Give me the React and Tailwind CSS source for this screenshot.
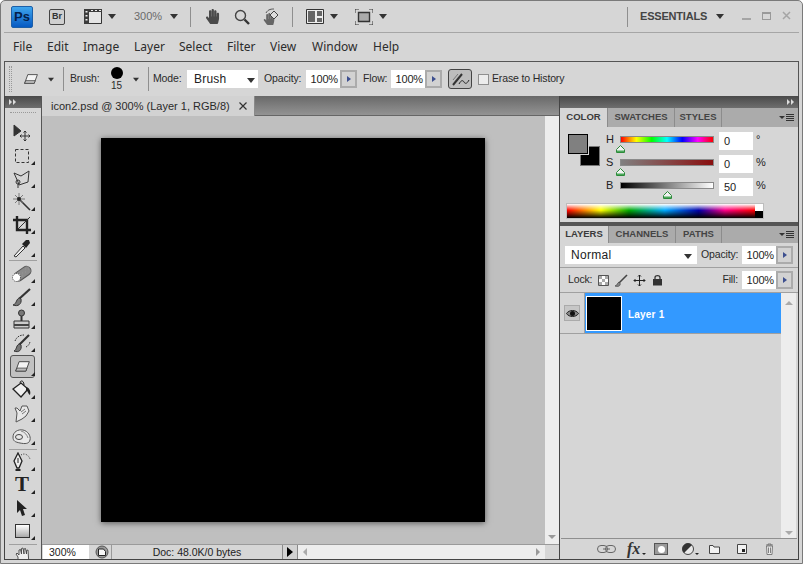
import React from "react";
import { FaHandPaper } from "react-icons/fa";

const Down = ({ className = "" }) => (
  <div className={`w-0 h-0 border-x-[4px] border-x-transparent border-t-[5px] border-t-[#333] ${className}`} />
);

const Sep = ({ className = "" }) => <div className={`w-px bg-[#8f8f8f] ${className}`} />;

const Corner = () => (
  <div className="absolute right-[6px] bottom-[2px] w-0 h-0 border-l-[4px] border-l-transparent border-b-[4px] border-b-[#222]" />
);

const Tool = ({ children, more = true, active = false, className = "" }) => (
  <div className={`relative h-[23px] shrink-0 flex items-center justify-center ${className}`}>
    {active && (
      <div className="absolute left-[5px] top-0 w-[25px] h-[23px] rounded-[3px] border border-[#555] bg-[#c2c2c2]" />
    )}
    <div className="relative flex items-center justify-center -translate-x-[1px]">{children}</div>
    {more && <Corner />}
  </div>
);

const ToolSep = ({ className = "" }) => <div className={`mx-[4px] h-px shrink-0 bg-[#a0a0a0] ${className}`} />;

const Stepper = () => (
  <div className="w-[17px] h-[18px] bg-[#d2d2d2] border-2 border-[#ababab] flex items-center justify-center">
    <div className="w-0 h-0 border-y-[3px] border-y-transparent border-l-[4px] border-l-[#3d4f8f]" />
  </div>
);

const PctInput = ({ value = "100%" }) => (
  <div className="flex items-center">
    <div className="w-[34px] h-[18px] bg-white text-[11px] leading-[18px] text-right pr-[2px] text-[#222]">{value}</div>
    <Stepper />
  </div>
);

const PanelTab = ({ label, width, active }) => (
  <div
    className={`h-full flex items-center justify-center border-r border-[#8c8c8c] font-bold text-[9.5px] ${width} ${
      active ? "bg-[#d6d6d6] text-[#3a3a3a]" : "text-[#444]"
    }`}
  >
    {label}
  </div>
);

const PanelMenu = () => (
  <div className="ml-auto mr-[4px] flex items-center gap-[1px]">
    <div className="w-0 h-0 border-x-[3px] border-x-transparent border-t-[3px] border-t-[#333]" />
    <div className="flex flex-col gap-[1px]">
      <div className="w-[8px] h-px bg-[#333]" />
      <div className="w-[8px] h-px bg-[#333]" />
      <div className="w-[8px] h-px bg-[#333]" />
      <div className="w-[8px] h-px bg-[#333]" />
    </div>
  </div>
);

const Slider = ({ label, track, value, unit, thumb }) => (
  <div className="flex h-[23px] items-start">
    <div className="w-[14px] text-[11px] leading-[14px] text-[#222]">{label}</div>
    <div className="relative w-[94px] h-[7px] mt-[4px] border border-[#8a8a8a]">
      <div className={`w-full h-full ${track}`} />
      <div className={`absolute top-[8px] ${thumb}`}>
        <svg width="9" height="8" viewBox="0 0 9 8">
          <path d="M4.5 .5 8.5 4.5V7.5H.5V4.5Z" fill="#f2f2f2" stroke="#2c8a3a" />
          <path d="M1 5.5H8V7H1Z" fill="#4aa85a" />
        </svg>
      </div>
    </div>
    <div className="ml-[5px] w-[34px] h-[18px] bg-white text-[11px] leading-[18px] pl-[5px] text-[#222]">{value}</div>
    <div className="ml-[3px] text-[11px] leading-[14px] text-[#222]">{unit}</div>
  </div>
);

const Darrows = () => (
  <div className="flex gap-[1px]">
    <div className="w-0 h-0 border-y-[3px] border-y-transparent border-l-[3px] border-l-[#ddd]" />
    <div className="w-0 h-0 border-y-[3px] border-y-transparent border-l-[3px] border-l-[#ddd]" />
  </div>
);

const EraserIcon = ({ size = 20 }) => (
  <svg width={size} height={size * 0.75} viewBox="0 0 20 15">
    <path d="M6 2 18 2 14 13 2 13Z" fill="#f4f4f4" stroke="#333" />
    <path d="M3.5 9.5 15.2 9.5 14 13 2 13Z" fill="#bbb" stroke="#333" strokeWidth=".8" />
  </svg>
);

export default function App() {
  return (
    <div
      className="w-[803px] h-[564px] overflow-hidden bg-[#d6d6d6] flex flex-col rounded-t-[5px] border border-[#7a7a7a] text-[#333]"
      style={{ fontFamily: '"Liberation Sans", Arial, sans-serif' }}
    >
      {/* application bar */}
      <div className="h-[32px] mx-[3px] border-b border-[#a6a6a6] flex items-center shrink-0 relative">
        <div className="ml-[7px] w-[22px] h-[22px] rounded-[2px] border border-[#1c5fa8] bg-[linear-gradient(to_bottom,#3fa6ee,#0659c2)] flex items-center justify-center font-bold text-[13px] text-[#04204a]">
          Ps
        </div>
        <div className="ml-[16px] w-[16px] h-[16px] rounded-[2px] border border-[#444] bg-[#d0d0d0] flex items-center justify-center font-bold text-[9px] text-[#333]">
          Br
        </div>
        <svg className="ml-[19px]" width="18" height="15" viewBox="0 0 18 15">
          <path d="M.5 .5H17.5V14.5H.5Z" fill="#e4e4e4" stroke="#333" />
          <path d="M0 0H5V15H0ZM5 0H18V3H5Z" fill="#3c3c3c" />
          <path d="M1.5 2H3.5V3.5H1.5ZM1.5 6H3.5V7.5H1.5ZM1.5 10H3.5V11.5H1.5ZM7 1H9V2H7ZM11 1H13V2H11ZM15 1H17V2H15Z" fill="#eee" />
        </svg>
        <Down className="ml-[6px]" />
        <div className="ml-[18px] w-[27px] text-[11px] text-[#6a6a6a]">300%</div>
        <Down className="ml-[9px]" />
        <Sep className="ml-[12px] h-[20px]" />
        <FaHandPaper className="ml-[14px] text-[15px] text-[#4a4a4a]" />
        <svg className="ml-[14px]" width="16" height="16" viewBox="0 0 16 16">
          <circle cx="6.5" cy="6.5" r="5" fill="none" stroke="#444" strokeWidth="1.4" />
          <path d="M10.5 10.5 15 15" stroke="#333" strokeWidth="2.4" />
        </svg>
        <div className="relative ml-[13px] w-[16px] h-[17px]">
          <FaHandPaper className="absolute left-0 bottom-0 text-[12px] text-[#666]" />
          <svg className="absolute left-0 top-0" width="16" height="17" viewBox="0 0 16 17">
            <path d="M7 7 11 3 15 7 11 11Z" fill="#ddd" stroke="#444" />
            <path d="M3 5C5 1 9 1 11 1" fill="none" stroke="#555" />
          </svg>
        </div>
        <Sep className="ml-[13px] h-[20px]" />
        <svg className="ml-[13px]" width="18" height="15" viewBox="0 0 18 15">
          <path d="M.5 .5H17.5V14.5H.5Z" fill="#eee" stroke="#333" />
          <path d="M2 2H9V13H2ZM11 2H16V7H11ZM11 9H16V13H11Z" fill="#666" />
        </svg>
        <Down className="ml-[6px]" />
        <svg className="ml-[17px]" width="18" height="16" viewBox="0 0 18 16">
          <path d="M0 4V0H4M14 0H18V4M18 12V16H14M4 16H0V12" fill="none" stroke="#333" />
          <path d="M3.5 3.5H14.5V12.5H3.5Z" fill="#aaa" stroke="#333" strokeWidth="1.4" />
        </svg>
        <Down className="ml-[6px]" />
        <Sep className="ml-[240px] h-[20px]" />
        <div className="ml-[12px] w-[68px] whitespace-nowrap font-bold text-[11px] tracking-[-0.2px] text-[#444]">ESSENTIALS</div>
        <Down className="ml-[8px]" />
        <div className="ml-[18px] w-[9px] h-[2px] bg-[#a5a5a5] mt-[4px]" />
        <div className="ml-[11px] w-[9px] h-[8px] border border-[#999] border-t-2 -mt-[2px]" />
        <svg className="ml-[11px] -mt-[2px]" width="9" height="9" viewBox="0 0 9 9">
          <path d="M1 1 8 8M8 1 1 8" stroke="#a5a5a5" strokeWidth="1.5" />
        </svg>
      </div>

      {/* menu */}
      <div className="h-[28px] shrink-0 flex items-center pl-[12px] text-[12px] text-[#2c2c2c]" style={{ fontFamily: '"Noto Sans", sans-serif' }}>
        <div className="w-[34px]">File</div>
        <div className="w-[36px]">Edit</div>
        <div className="w-[51px]">Image</div>
        <div className="w-[45px]">Layer</div>
        <div className="w-[48px]">Select</div>
        <div className="w-[43px]">Filter</div>
        <div className="w-[42px]">View</div>
        <div className="w-[61px]">Window</div>
        <div>Help</div>
      </div>

      {/* options bar */}
      <div className="h-[35px] mx-[3px] shrink-0 border border-b-0 border-[#555] flex items-center text-[10.5px] tracking-[-0.15px] text-[#2a2a2a] whitespace-nowrap">
        <div className="ml-[4px] w-[3px] h-[26px] border-x border-dotted border-[#999]" />
        <div className="ml-[11px]">
          <EraserIcon size={16} />
        </div>
        <Down className="ml-[8px] scale-75" />
        <Sep className="ml-[8px] h-[24px]" />
        <div className="ml-[6px] w-[29px]">Brush:</div>
        <div className="ml-[11px] w-[13px] flex flex-col items-center -mt-[1px]">
          <div className="w-[12px] h-[12px] rounded-full bg-black" />
          <div className="text-[10px] leading-[11px] mt-[1px]">15</div>
        </div>
        <Down className="ml-[9px] scale-75" />
        <Sep className="ml-[8px] h-[24px]" />
        <div className="ml-[4px] w-[29px]">Mode:</div>
        <div className="ml-[5px] w-[71px] h-[18px] bg-white flex items-center pl-[7px] text-[12px] text-[#222] tracking-[0.2px]">
          Brush
          <Down className="ml-auto mr-[3px] mt-[2px]" />
        </div>
        <div className="ml-[6px] w-[38px]">Opacity:</div>
        <div className="ml-[4px]">
          <PctInput />
        </div>
        <div className="ml-[6px] w-[24px]">Flow:</div>
        <div className="ml-[4px]">
          <PctInput />
        </div>
        <div className="ml-[6px] w-[24px] h-[20px] rounded-[3px] border border-[#444] bg-[#bdbdbd] flex items-center justify-center">
          <svg width="20" height="16" viewBox="0 0 20 16">
            <path d="M3 14 12 3" stroke="#333" strokeWidth="2" />
            <path d="M3 9 8 3" stroke="#777" strokeWidth="1" />
            <path d="M9 13C11 9 13 9 14 11S17 13 19 9" fill="none" stroke="#222" />
          </svg>
        </div>
        <div className="ml-[6px] w-[11px] h-[11px] border border-[#8f8f8f] bg-[#ececec]" />
        <div className="ml-[3px]">Erase to History</div>
      </div>

      {/* workspace */}
      <div className="flex-1 mx-[3px] mb-[3px] border border-[#444] border-t-0 flex min-h-0">
        {/* tools */}
        <div className="w-[37px] shrink-0 border-r border-[#555] flex flex-col overflow-hidden">
          <div className="h-[12px] shrink-0 bg-[linear-gradient(to_bottom,#4a4a4a,#6e6e6e)] flex items-center pl-[4px]">
            <Darrows />
          </div>
          <div className="h-[13px] shrink-0 flex flex-col pt-[4px]">
            <div className="mx-[5px] border-b border-dotted border-[#999]" />
          </div>
          <Tool more={false}>
            <svg width="20" height="20" viewBox="0 0 20 20">
              <path d="M2 2V13L9 8Z" fill="#333" stroke="#333" />
              <path d="M13 8V18M8 13H18M11.5 9.5 13 8 14.5 9.5M11.5 16.5 13 18 14.5 16.5M9.5 11.5 8 13 9.5 14.5M16.5 11.5 18 13 16.5 14.5" fill="none" stroke="#333" />
            </svg>
          </Tool>
          <Tool>
            <svg width="18" height="18" viewBox="0 0 18 18">
              <path d="M2.5 2.5H15.5V15.5H2.5Z" fill="none" stroke="#333" strokeDasharray="3 2" />
            </svg>
          </Tool>
          <Tool>
            <svg width="20" height="20" viewBox="0 0 20 20">
              <path d="M2 4 9 7 17 2 16 13 7 16 6 13Z" fill="none" stroke="#333" />
              <circle cx="6" cy="13" r="2" fill="none" stroke="#333" />
              <path d="M6 15V19" stroke="#333" />
            </svg>
          </Tool>
          <Tool>
            <svg width="20" height="20" viewBox="0 0 20 20">
              <path d="M8 8 18 18" stroke="#333" strokeWidth="1.6" />
              <path d="M7 1V13M1 7H13M3 3 11 11M11 3 3 11" stroke="#666" strokeWidth=".8" />
              <circle cx="7" cy="7" r="2" fill="#222" />
            </svg>
          </Tool>
          <Tool>
            <svg width="20" height="20" viewBox="0 0 20 20">
              <path d="M5 1V15H19M1 5H15V19" fill="none" stroke="#222" strokeWidth="2.4" />
              <path d="M6 14 18 2" stroke="#333" />
            </svg>
          </Tool>
          <Tool>
            <svg width="20" height="20" viewBox="0 0 20 20">
              <path d="M2 18 11 8 13 10 4 19Z" fill="#eee" stroke="#333" />
              <path d="M10 6 14 10 18 5 17 2 14 2Z" fill="#222" />
            </svg>
          </Tool>
          <ToolSep className="my-[1px]" />
          <Tool>
            <svg width="22" height="20" viewBox="0 0 22 20">
              <rect x="2" y="5.500" width="19" height="9" rx="4.500" transform="rotate(-35 11 10)" fill="#8a8a8a" stroke="#555" />
              <circle cx="5.500" cy="13.500" r="4" fill="#fff" stroke="#333" strokeDasharray="1 1" />
              <path d="M11 9h.1M14 8h.1M14 5h.1M17 5h.1M11 12h.1" stroke="#ddd" strokeWidth="1.4" />
            </svg>
          </Tool>
          <Tool>
            <svg width="20" height="20" viewBox="0 0 20 20">
              <path d="M7 12 18 2" stroke="#333" strokeWidth="2.2" />
              <path d="M8 11C4 11 5 17 1 18 6 20 10 17 9 12Z" fill="#777" stroke="#333" />
            </svg>
          </Tool>
          <Tool>
            <svg width="20" height="21" viewBox="0 0 20 21">
              <circle cx="9.5" cy="4" r="3" fill="#777" stroke="#333" />
              <path d="M8.5 7H10.5V12H8.5Z" fill="#333" />
              <path d="M2 12H17V19H2Z" fill="#ccc" stroke="#333" />
              <path d="M2 15H17V17H2Z" fill="#444" />
            </svg>
          </Tool>
          <Tool>
            <svg width="20" height="20" viewBox="0 0 20 20">
              <path d="M7 12 17 2" stroke="#333" strokeWidth="2.2" />
              <path d="M8 11C4 11 5 17 2 18 7 20 10 17 9 12Z" fill="#777" stroke="#333" />
              <path d="M3 8C5 3 9 2 12 2M14 14C16 13 18 11 18 8" fill="none" stroke="#333" strokeDasharray="1.5 1" />
            </svg>
          </Tool>
          <Tool active className="mt-[1px]">
            <EraserIcon size={17} />
          </Tool>
          <Tool>
            <svg width="20" height="20" viewBox="0 0 20 20">
              <path d="M1 9 9 3 16 9 9 17Z" fill="#f0f0f0" stroke="#222" strokeWidth="1.3" />
              <path d="M8 3C8 0 12 0 12 5" fill="none" stroke="#222" />
              <path d="M14 7C18 8 19 12 18 15 16 14 16 11 14 10Z" fill="#222" />
            </svg>
          </Tool>
          <Tool>
            <svg width="18" height="20" viewBox="0 0 18 20">
              <path d="M3 19 4 10 2 5 4 5 7 8 9 3 14 3 16 8 13 13 9 16Z" fill="#e8e8e8" stroke="#555" />
              <path d="M8 9 12 6M9 11 13 8" stroke="#777" />
            </svg>
          </Tool>
          <Tool>
            <svg width="20" height="18" viewBox="0 0 20 18">
              <path d="M1 10C1 5 6 2 11 3S19 9 18 13 13 17 8 16 1 14 1 10Z" fill="#e8e8e8" stroke="#555" />
              <ellipse cx="7" cy="10" rx="3.500" ry="2.500" fill="none" stroke="#444" />
              <path d="M9 4C13 5 15 8 16 11" fill="none" stroke="#888" />
            </svg>
          </Tool>
          <ToolSep className="mt-[2px]" />
          <Tool>
            <svg width="20" height="20" viewBox="0 0 20 20">
              <path d="M6 1 10 9 7 16H5L2 9Z" fill="#eee" stroke="#222" strokeWidth="1.3" />
              <path d="M6 6V11" stroke="#222" />
              <path d="M3.500 17H8.500V19H3.500Z" fill="#222" />
              <path d="M9 3C12 1 16 2 18 7" fill="none" stroke="#333" strokeDasharray="1 1.500" />
            </svg>
          </Tool>
          <Tool>
            <div className="text-[21px] leading-[21px] font-bold text-[#222]" style={{ fontFamily: '"Liberation Serif", serif' }}>
              T
            </div>
          </Tool>
          <Tool>
            <svg width="12" height="18" viewBox="0 0 12 18">
              <path d="M1 1V14L4 11 6 17 9 16 7 10H11Z" fill="#222" />
            </svg>
          </Tool>
          <Tool>
            <div className="w-[15px] h-[14px] border border-[#333] bg-[linear-gradient(to_bottom,#fff,#aaa)]" />
          </Tool>
          <ToolSep className="mt-[2px] mb-[2px]" />
          <div className="flex justify-center pl-[1px] shrink-0">
            <svg width="18" height="18" viewBox="0 0 18 18">
              <path d="M3 18V10L1 7 2 6 4 8V3L5.500 2.500 6.500 7V1.500L8 1 9 7V2L10.500 1.500 11.500 7V3.500L13 3 14 18Z" fill="#eee" stroke="#444" strokeWidth=".9" />
            </svg>
          </div>
        </div>

        {/* document */}
        <div className="w-[517px] shrink-0 flex flex-col">
          <div className="h-[20px] shrink-0 bg-[linear-gradient(to_bottom,#696969,#939393)] flex border-b border-[#666]">
            <div className="w-[213px] h-[20px] bg-[#d2d2d2] flex items-center pl-[9px] text-[11px] text-[#2a2a2a] border-r border-[#8a8a8a] whitespace-nowrap">
              icon2.psd @ 300% (Layer 1, RGB/8)
              <svg className="ml-[9px]" width="8" height="8" viewBox="0 0 8 8">
                <path d="M.5 .5 7.500 7.500M7.500 .5 .5 7.500" stroke="#333" strokeWidth="1.200" />
              </svg>
            </div>
          </div>
          <div className="h-[428px] shrink-0 flex">
            <div className="w-[503px] pr-[1px] bg-[#bfbfbf] flex items-center justify-center">
              <div className="w-[384px] h-[384px] bg-black shadow-[0_1px_6px_rgba(0,0,0,0.55)]" />
            </div>
            <div className="w-[14px] bg-[#ededed] flex flex-col items-center justify-end pb-[5px]">
              <div className="w-0 h-0 border-x-[4px] border-x-transparent border-t-[4px] border-t-[#999]" />
            </div>
          </div>
          <div className="flex-1 flex border-t border-[#9a9a9a] text-[10.5px] leading-[14px] text-[#222]">
            <div className="w-[46px] ml-px bg-white pl-[6px]">300%</div>
            <div className="w-[23px] flex items-center justify-end pr-[2px] border-r border-[#9a9a9a]">
              <svg width="14" height="14" viewBox="0 0 14 14">
                <circle cx="7" cy="7" r="6" fill="#999" stroke="#555" />
                <path d="M3.500 4H8.500L10.500 6.500V10.500H3.500Z" fill="#f6f6f6" stroke="#222" />
              </svg>
            </div>
            <div className="w-[170px] text-center">Doc: 48.0K/0 bytes</div>
            <div className="w-[16px] bg-[#d2d2d2] border-l border-r border-[#8a8a8a] flex items-center justify-center">
              <div className="w-0 h-0 border-y-[5px] border-y-transparent border-l-[6px] border-l-black" />
            </div>
            <div className="w-[247px] bg-[#ededed] flex items-center pl-[5px]">
              <div className="w-0 h-0 border-y-[4px] border-y-transparent border-r-[4px] border-r-[#aaa]" />
              <div className="ml-auto mr-[5px] w-0 h-0 border-y-[4px] border-y-transparent border-l-[4px] border-l-[#999]" />
            </div>
          </div>
        </div>

        {/* panels */}
        <div className="flex-1 border-l border-[#444] flex flex-col min-w-0">
          <div className="h-[12px] shrink-0 bg-[linear-gradient(to_bottom,#4a4a4a,#6e6e6e)] flex items-center justify-end pr-[4px]">
            <Darrows />
          </div>

          <div className="h-[19px] shrink-0 bg-[#ababab] flex">
            <PanelTab label="COLOR" width="w-[48px]" active />
            <PanelTab label="SWATCHES" width="w-[67px]" />
            <PanelTab label="STYLES" width="w-[47px]" />
            <PanelMenu />
          </div>
          <div className="h-[95px] shrink-0 flex flex-col pl-[6px] pt-[5px]">
            <div className="flex">
              <div className="relative w-[46px] h-[38px] shrink-0">
                <div className="absolute left-[14px] top-[14px] w-[20px] h-[20px] bg-black border border-[#777] outline outline-1 outline-[#d6d6d6]" />
                <div className="absolute left-[2px] top-[2px] w-[20px] h-[20px] bg-[#808080] border border-black outline outline-1 outline-[#d6d6d6]" />
              </div>
              <div className="flex flex-col ml-[-6px]">
                <Slider
                  label="H"
                  value="0"
                  unit="°"
                  thumb="-left-[5px]"
                  track="bg-[linear-gradient(to_right,#f00,#ff0,#0f0,#0ff,#00f,#f0f,#f00)]"
                />
                <Slider label="S" value="0" unit="%" thumb="-left-[5px]" track="bg-[linear-gradient(to_right,#808080,#8a0f0f)]" />
                <Slider label="B" value="50" unit="%" thumb="left-[42px]" track="bg-[linear-gradient(to_right,#000,#fff)]" />
              </div>
            </div>
            <div className="mt-[2px] w-[198px] h-[16px] border border-[#bdbdbd] flex">
              <div className="flex-1 bg-[linear-gradient(to_bottom,#fff,transparent_45%,#000),linear-gradient(to_right,#f00,#ff0_18%,#0a0_33%,#0af_52%,#00a_70%,#f08_84%,#f00)]" />
              <div className="w-[8px] flex flex-col">
                <div className="flex-1 bg-white" />
                <div className="flex-1 bg-black" />
              </div>
            </div>
          </div>

          <div className="h-[4px] shrink-0 bg-[#555]" />

          <div className="h-[17px] shrink-0 bg-[#ababab] flex">
            <PanelTab label="LAYERS" width="w-[49px]" active />
            <PanelTab label="CHANNELS" width="w-[67px]" />
            <PanelTab label="PATHS" width="w-[46px]" />
            <PanelMenu />
          </div>
          <div className="h-[25px] shrink-0 border-b border-[#a0a0a0] flex items-center pl-[5px] text-[10.5px] tracking-[-0.15px] text-[#2a2a2a] whitespace-nowrap">
            <div className="w-[132px] h-[18px] bg-white flex items-center pl-[6px] text-[12px] tracking-[0.3px] text-[#222]">
              Normal
              <Down className="ml-auto mr-[5px] mt-[2px]" />
            </div>
            <div className="ml-[4px] w-[38px]">Opacity:</div>
            <div className="ml-[3px]">
              <PctInput />
            </div>
          </div>
          <div className="h-[25px] shrink-0 border-b border-[#a0a0a0] flex items-center pl-[8px] text-[10.5px] tracking-[-0.15px] text-[#2a2a2a]">
            <div className="w-[25px]">Lock:</div>
            <svg className="ml-[5px]" width="11" height="11" viewBox="0 0 11 11">
              <path d="M.5 .5H10.500V10.500H.5Z" fill="#fff" stroke="#555" />
              <path d="M1 1H4V4H1ZM7 1H10V4H7ZM4 4H7V7H4ZM1 7H4V10H1ZM7 7H10V10H7Z" fill="#aaa" />
            </svg>
            <svg className="ml-[6px]" width="13" height="13" viewBox="0 0 13 13">
              <path d="M4 9 12 1" stroke="#444" strokeWidth="1.600" />
              <path d="M4 8C2 9 3 11 0 12 3 13 6 12 5 9Z" fill="#888" stroke="#444" strokeWidth=".7" />
            </svg>
            <svg className="ml-[5px]" width="13" height="13" viewBox="0 0 13 13">
              <path d="M6.500 1V12M1 6.500H12M5 2.500 6.500 1 8 2.500M5 10.500 6.500 12 8 10.500M2.500 5 1 6.500 2.500 8M10.500 5 12 6.500 10.500 8" fill="none" stroke="#222" />
            </svg>
            <svg className="ml-[6px]" width="11" height="12" viewBox="0 0 11 12">
              <path d="M3 5V3.500C3 1 8 1 8 3.500V5" fill="none" stroke="#333" strokeWidth="1.300" />
              <path d="M1 5H10V11.500H1Z" fill="#333" />
            </svg>
            <div className="ml-auto mr-[4px]">Fill:</div>
            <div className="mr-[5px]">
              <PctInput />
            </div>
          </div>
          <div className="h-[245px] shrink-0 flex">
            <div className="w-[221px] flex flex-col">
              <div className="h-[41px] flex border-b border-[#a0a0a0]">
                <div className="w-[25px] flex items-center justify-center border-r border-[#a0a0a0]">
                  <div className="w-[16px] h-[16px] bg-[#c6c6c6] border border-[#aaa] flex items-center justify-center">
                    <svg width="13" height="9" viewBox="0 0 13 9">
                      <path d="M.5 4.500C3 .5 10 .5 12.500 4.500 10 8.500 3 8.500 .5 4.500Z" fill="#888" stroke="#222" />
                      <circle cx="6.500" cy="4.500" r="2.500" fill="#111" />
                    </svg>
                  </div>
                </div>
                <div className="flex-1 bg-[#3399ff] flex items-center pl-[1px] text-white font-bold text-[10px] tracking-[0.2px]">
                  <div className="w-[36px] h-[35px] bg-black border border-white" />
                  <div className="ml-[6px] pt-[2px]">Layer 1</div>
                </div>
              </div>
            </div>
            <div className="w-[15px] bg-[#ededed] flex flex-col items-center justify-between pt-[8px] pb-[3px]">
              <div className="w-0 h-0 border-x-[4px] border-x-transparent border-b-[4px] border-b-[#aaa]" />
              <div className="w-0 h-0 border-x-[4px] border-x-transparent border-t-[4px] border-t-[#aaa]" />
            </div>
          </div>
          <div className="flex-1 border-t border-[#8f8f8f] flex items-center pl-[36px] mx-[1px]">
            <svg width="19" height="8" viewBox="0 0 19 8">
              <rect x=".5" y=".5" width="10" height="7" rx="3.500" fill="none" stroke="#666" />
              <rect x="8.500" y=".5" width="10" height="7" rx="3.500" fill="none" stroke="#666" />
              <path d="M6 4H13" stroke="#666" />
            </svg>
            <div className="ml-[11px] font-bold italic text-[16px] leading-[14px] text-[#333]" style={{ fontFamily: '"Liberation Serif", serif' }}>
              fx
            </div>
            <div className="ml-[2px] mt-[10px] w-0 h-0 border-x-[2px] border-x-transparent border-t-[2px] border-t-[#222]" />
            <div className="ml-[8px] w-[14px] h-[12px] bg-[#999] border border-[#555] flex items-center justify-center">
              <div className="w-[7px] h-[7px] rounded-full bg-white" />
            </div>
            <svg className="ml-[14px]" width="12" height="12" viewBox="0 0 12 12">
              <circle cx="6" cy="6" r="5.500" fill="#e8e8e8" stroke="#444" />
              <path d="M10 2 2 10A5.500 5.500 0 0 1 10 2Z" fill="#333" />
            </svg>
            <div className="ml-[1px] mt-[10px] w-0 h-0 border-x-[2px] border-x-transparent border-t-[2px] border-t-[#222]" />
            <svg className="ml-[10px]" width="11" height="9" viewBox="0 0 11 9">
              <path d="M.5 8.500V.5H4L5 2H10.500V8.500Z" fill="#f2f2f2" stroke="#444" />
            </svg>
            <svg className="ml-[17px]" width="10" height="10" viewBox="0 0 10 10">
              <path d="M.5 .5H9.500V9.500H.5Z" fill="#f2f2f2" stroke="#444" />
              <path d="M5 5H8V8H5Z" fill="#222" />
            </svg>
            <svg className="ml-[18px]" width="9" height="12" viewBox="0 0 9 12">
              <path d="M1 2H8M3 2V1H6V2M1.500 3 2 11.500H7L7.500 3ZM3.500 4.500V10M5.500 4.500V10" fill="#e8e8e8" stroke="#666" strokeWidth=".8" />
            </svg>
          </div>
        </div>
      </div>
    </div>
  );
}
